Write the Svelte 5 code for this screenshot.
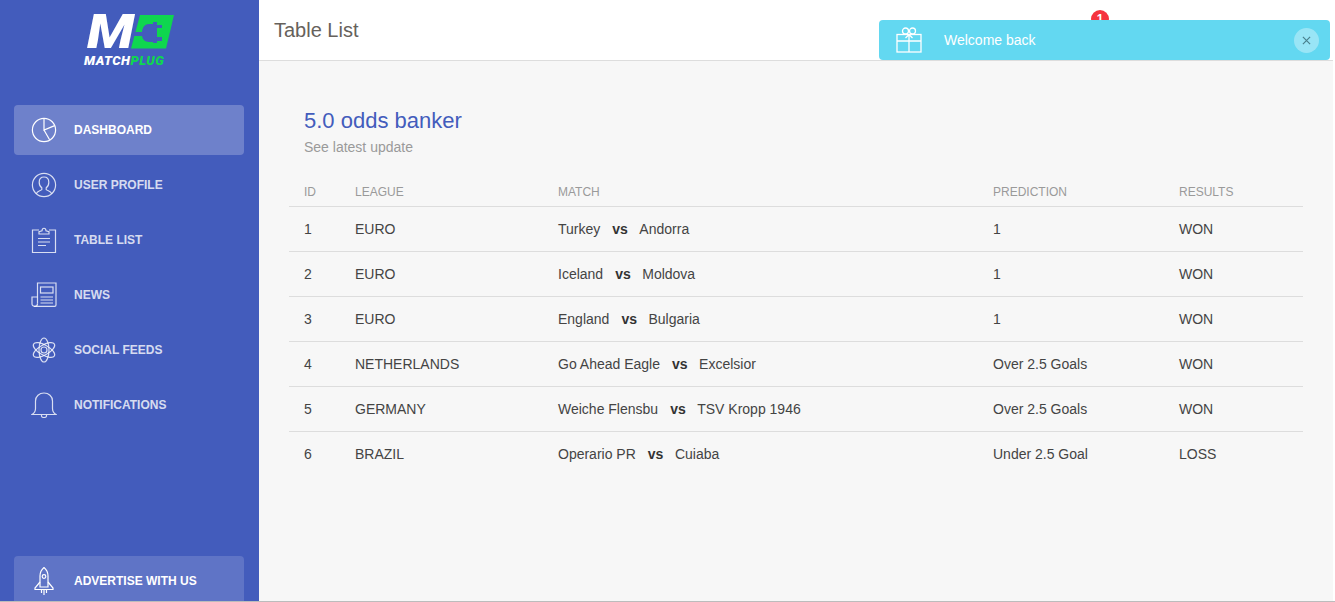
<script>
  const navItems = [
    { label: 'Dashboard', icon: 'chart', active: true },
    { label: 'User Profile', icon: 'user' },
    { label: 'Table List', icon: 'clipboard' },
    { label: 'News', icon: 'news' },
    { label: 'Social Feeds', icon: 'atom' },
    { label: 'Notifications', icon: 'bell' }
  ];

  const rows = [
    { id: 1, league: 'EURO', home: 'Turkey', away: 'Andorra', prediction: '1', result: 'WON' },
    { id: 2, league: 'EURO', home: 'Iceland', away: 'Moldova', prediction: '1', result: 'WON' },
    { id: 3, league: 'EURO', home: 'England', away: 'Bulgaria', prediction: '1', result: 'WON' },
    { id: 4, league: 'NETHERLANDS', home: 'Go Ahead Eagle', away: 'Excelsior', prediction: 'Over 2.5 Goals', result: 'WON' },
    { id: 5, league: 'GERMANY', home: 'Weiche Flensbu', away: 'TSV Kropp 1946', prediction: 'Over 2.5 Goals', result: 'WON' },
    { id: 6, league: 'BRAZIL', home: 'Operario PR', away: 'Cuiaba', prediction: 'Under 2.5 Goal', result: 'LOSS' }
  ];
</script>

{#snippet navIcon(name)}
  <svg class="nav-icon" viewBox="0 0 26 26" fill="none" stroke="currentColor" stroke-width="1.200">
    {#if name === 'chart'}
      <circle cx="13" cy="13" r="11.600" />
      <path d="M13 1.400V13l10.600-4.400M13 13l5.600 9.800" />
    {:else if name === 'user'}
      <circle cx="13" cy="13" r="11.600" />
      <path d="M5.400 21.600c.6-2.600 3.800-2.600 5.400-4v-1.800c-1.600-1-2.600-3-2.600-5.600 0-3.200 2-5.200 4.800-5.200s4.800 2 4.800 5.200c0 2.600-1 4.600-2.600 5.600v1.800c1.600 1.400 4.800 1.400 5.400 4" />
    {:else if name === 'clipboard'}
      <path d="M8 3H1.500v22.500h23V3H18" />
      <path d="M8 7V4.600L11 3.800C11.200.4 14.800.4 15 3.800l3 .8V7z" />
      <path d="M7 11.500h12M7 15h12M7 18.500h8" />
    {:else if name === 'news'}
      <path d="M6.500 21.500V1h18.500v22c0 .8-.6 1.400-1.400 1.400H3" />
      <path d="M6.500 21.500c0 1.600-1.200 2.900-2.500 2.900S1 23.500 1 22v-7h5.500" />
      <rect x="9.500" y="5" width="12.500" height="6" />
      <path d="M9.500 15h12.500M9.500 18h12.500M9.500 21h12.500" />
    {:else if name === 'atom'}
      <circle cx="13" cy="13" r="3" />
      <ellipse cx="13" cy="13" rx="5" ry="12" />
      <ellipse cx="13" cy="13" rx="5" ry="12" transform="rotate(60 13 13)" />
      <ellipse cx="13" cy="13" rx="5" ry="12" transform="rotate(-60 13 13)" />
    {:else}
      <path d="M1 22.500c2.500-1.500 3.500-3 3.500-6V9c0-4.700 3.800-8 8.500-8s8.500 3.300 8.500 8v7.500c0 3 1 4.500 3.500 6z" />
      <path d="M10.500 23v1c0 1 1 1.500 2.500 1.500s2.500-.5 2.500-1.500v-1" />
    {/if}
  </svg>
{/snippet}

<div class="page">
  <div class="layout">
    <aside class="sidebar">
      <div class="logo">
        <div class="logo-mark">
          <span class="logo-m">M</span>
          <svg class="logo-plug" viewBox="0 0 45 34">
            <path d="M11 0h34l-8 33.500H2z" fill="#0fd64f" />
            <path d="M4 17h9c.5-5 3-8 7-8h4V7h4v3h5v3h-5v9h5v4h-5v2h-4v-1h-4c-4 0-6.500-3-7-6H4z" fill="#435cbc" />
          </svg>
        </div>
        <div class="logo-name"><span>MATCH</span><span class="green">PLUG</span></div>
      </div>

      <nav class="nav">
        {#each navItems as item}
          <a class="nav-item" class:active={item.active} href="#top">
            {@render navIcon(item.icon)}
            <span>{item.label}</span>
          </a>
        {/each}
      </nav>

      <a class="nav-item advertise" href="#top">
        <svg class="nav-icon rocket" viewBox="0 0 26 28" fill="none" stroke="currentColor" stroke-width="1.200">
          <path d="M13 .5c3 2.500 4 5.500 4 8.500v11H9V9c0-3 1-6 4-8.500z" />
          <circle cx="13" cy="9.500" r="1.800" />
          <path d="M9 15l-5 6v1.500h18V21l-5-6M13 23v5M10.500 23v3M15.500 23v3" />
        </svg>
        <span>Advertise with us</span>
      </a>
    </aside>

    <div class="main">
      <header class="topbar">
        <h1>Table List</h1>
        <span class="badge">1</span>
      </header>

      <section class="content">
        <h2>5.0 odds banker</h2>
        <p class="sub">See latest update</p>

        <table>
          <thead>
            <tr>
              <th class="c-id">ID</th>
              <th class="c-league">League</th>
              <th class="c-match">Match</th>
              <th class="c-pred">Prediction</th>
              <th>Results</th>
            </tr>
          </thead>
          <tbody>
            {#each rows as row}
              <tr>
                <td>{row.id}</td>
                <td>{row.league}</td>
                <td>{row.home}<b>vs</b>{row.away}</td>
                <td>{row.prediction}</td>
                <td>{row.result}</td>
              </tr>
            {/each}
          </tbody>
        </table>
      </section>
    </div>

    <div class="toast">
      <svg class="gift" viewBox="0 0 26 26" fill="none" stroke="currentColor" stroke-width="1.300">
        <rect x="1" y="7.500" width="24" height="17.500" />
        <path d="M1 14h24M13 7.500V25M13 7.500L9.500 11M13 7.500l3.500 3.500" />
        <circle cx="9.500" cy="4" r="3" />
        <circle cx="16.500" cy="4" r="3" />
      </svg>
      <span class="toast-text">Welcome back</span>
      <button class="toast-close" aria-label="Close">
        <svg viewBox="0 0 10 10" fill="none" stroke="currentColor" stroke-width="1.300">
          <path d="M1 1l8 8M9 1l-8 8" />
        </svg>
      </button>
    </div>
  </div>
</div>

<style>
  :global(body) {
    margin: 0;
    overflow: hidden;
    background: #fff;
    font-family: "Liberation Sans", Arial, sans-serif;
    color: #333;
  }

  .page {
    height: 601px;
    border-bottom: 1px solid #bcbcbc;
    overflow: hidden;
  }

  .layout {
    position: relative;
    display: flex;
    height: 601px;
    margin-right: 2px;
    background: #f7f7f7;
    overflow: hidden;
  }

  .sidebar {
    flex: none;
    width: 259px;
    padding: 0 15px 0 14px;
    box-sizing: border-box;
    background: #435cbc;
  }

  .logo {
    height: 105px;
    padding-top: 15px;
    box-sizing: border-box;
  }

  .logo-mark {
    display: flex;
    justify-content: flex-start;
    height: 34px;
    padding-left: 73px;
  }

  .logo-m {
    display: block;
    width: 46px;
    font: italic 900 48px/34px Roboto, sans-serif;
    color: #fff;
    transform: scaleX(1.150);
    transform-origin: left center;
  }

  .logo-plug {
    flex: none;
    width: 45px;
    height: 34px;
    margin-left: -4px;
  }

  .logo-name {
    margin-top: 5px;
    padding-left: 70px;
    font: italic 900 13px/14px Roboto, sans-serif;
    letter-spacing: 0.5px;
    color: #fff;
  }

  .green {
    color: #0fd64f;
  }

  .nav {
    display: flex;
    flex-direction: column;
    gap: 5px;
    height: 451px;
  }

  .nav-item {
    display: flex;
    align-items: center;
    height: 50px;
    padding-left: 17px;
    box-sizing: border-box;
    border-radius: 4px;
    color: rgba(255, 255, 255, 0.8);
    font-size: 12px;
    font-weight: 700;
    text-transform: uppercase;
    text-decoration: none;
  }

  .nav-item.active {
    background: rgba(255, 255, 255, 0.23);
    color: #fff;
  }

  .nav-icon {
    flex: none;
    width: 26px;
    height: 26px;
    margin-right: 17px;
  }

  .rocket {
    height: 28px;
  }

  .advertise {
    background: rgba(255, 255, 255, 0.15);
    color: #fff;
  }

  .main {
    flex: 1;
    min-width: 0;
  }

  .topbar {
    position: relative;
    display: flex;
    align-items: center;
    height: 61px;
    padding-left: 15px;
    box-sizing: border-box;
    background: #fff;
    border-bottom: 1px solid #ddd;
  }

  h1 {
    margin: 0;
    font-size: 20px;
    font-weight: 400;
    color: #66615b;
  }

  .badge {
    position: absolute;
    left: 832px;
    top: 10px;
    width: 18px;
    height: 18px;
    border-radius: 50%;
    background: #f5333f;
    color: #fff;
    font-size: 12px;
    font-weight: 700;
    line-height: 18px;
    text-align: center;
  }

  .content {
    padding: 45px 30px 0 30px;
  }

  h2 {
    margin: 0 0 0 15px;
    font-size: 22px;
    font-weight: 400;
    line-height: 29px;
    color: #435cbc;
  }

  .sub {
    margin: 2px 0 0 15px;
    font-size: 14px;
    line-height: 20px;
    color: #9a9a9a;
  }

  table {
    width: 100%;
    margin-top: 21px;
    border-collapse: collapse;
    table-layout: fixed;
    font-size: 14px;
  }

  th {
    height: 28px;
    padding: 0 0 0 15px;
    text-align: left;
    font-size: 12px;
    font-weight: 400;
    text-transform: uppercase;
    color: #9a9a9a;
    border-bottom: 1px solid #ddd;
  }

  td {
    height: 44px;
    padding: 0 0 0 15px;
    color: #444;
  }

  tbody tr:not(:last-child) td {
    border-bottom: 1px solid #ddd;
  }

  td b {
    margin: 0 11.500px 0 12px;
    font-weight: 700;
    color: #333;
  }

  .c-id { width: 36px; }
  .c-league { width: 188px; }
  .c-match { width: 420px; }
  .c-pred { width: 171px; }

  .toast {
    position: absolute;
    left: 879px;
    top: 20px;
    display: flex;
    align-items: center;
    width: 451px;
    height: 40px;
    padding: 0 11px 0 17px;
    box-sizing: border-box;
    border-radius: 4px;
    background: #63d8f1;
    color: #fff;
    font-size: 14px;
  }

  .gift {
    width: 26px;
    height: 26px;
    margin-right: 22px;
  }

  .toast-text {
    flex: 1;
  }

  .toast-close {
    display: flex;
    align-items: center;
    justify-content: center;
    width: 25px;
    height: 25px;
    padding: 0;
    border: 0;
    border-radius: 50%;
    background: rgba(255, 255, 255, 0.35);
    color: #4a7f8c;
  }

  .toast-close svg {
    width: 9px;
    height: 9px;
  }
</style>
